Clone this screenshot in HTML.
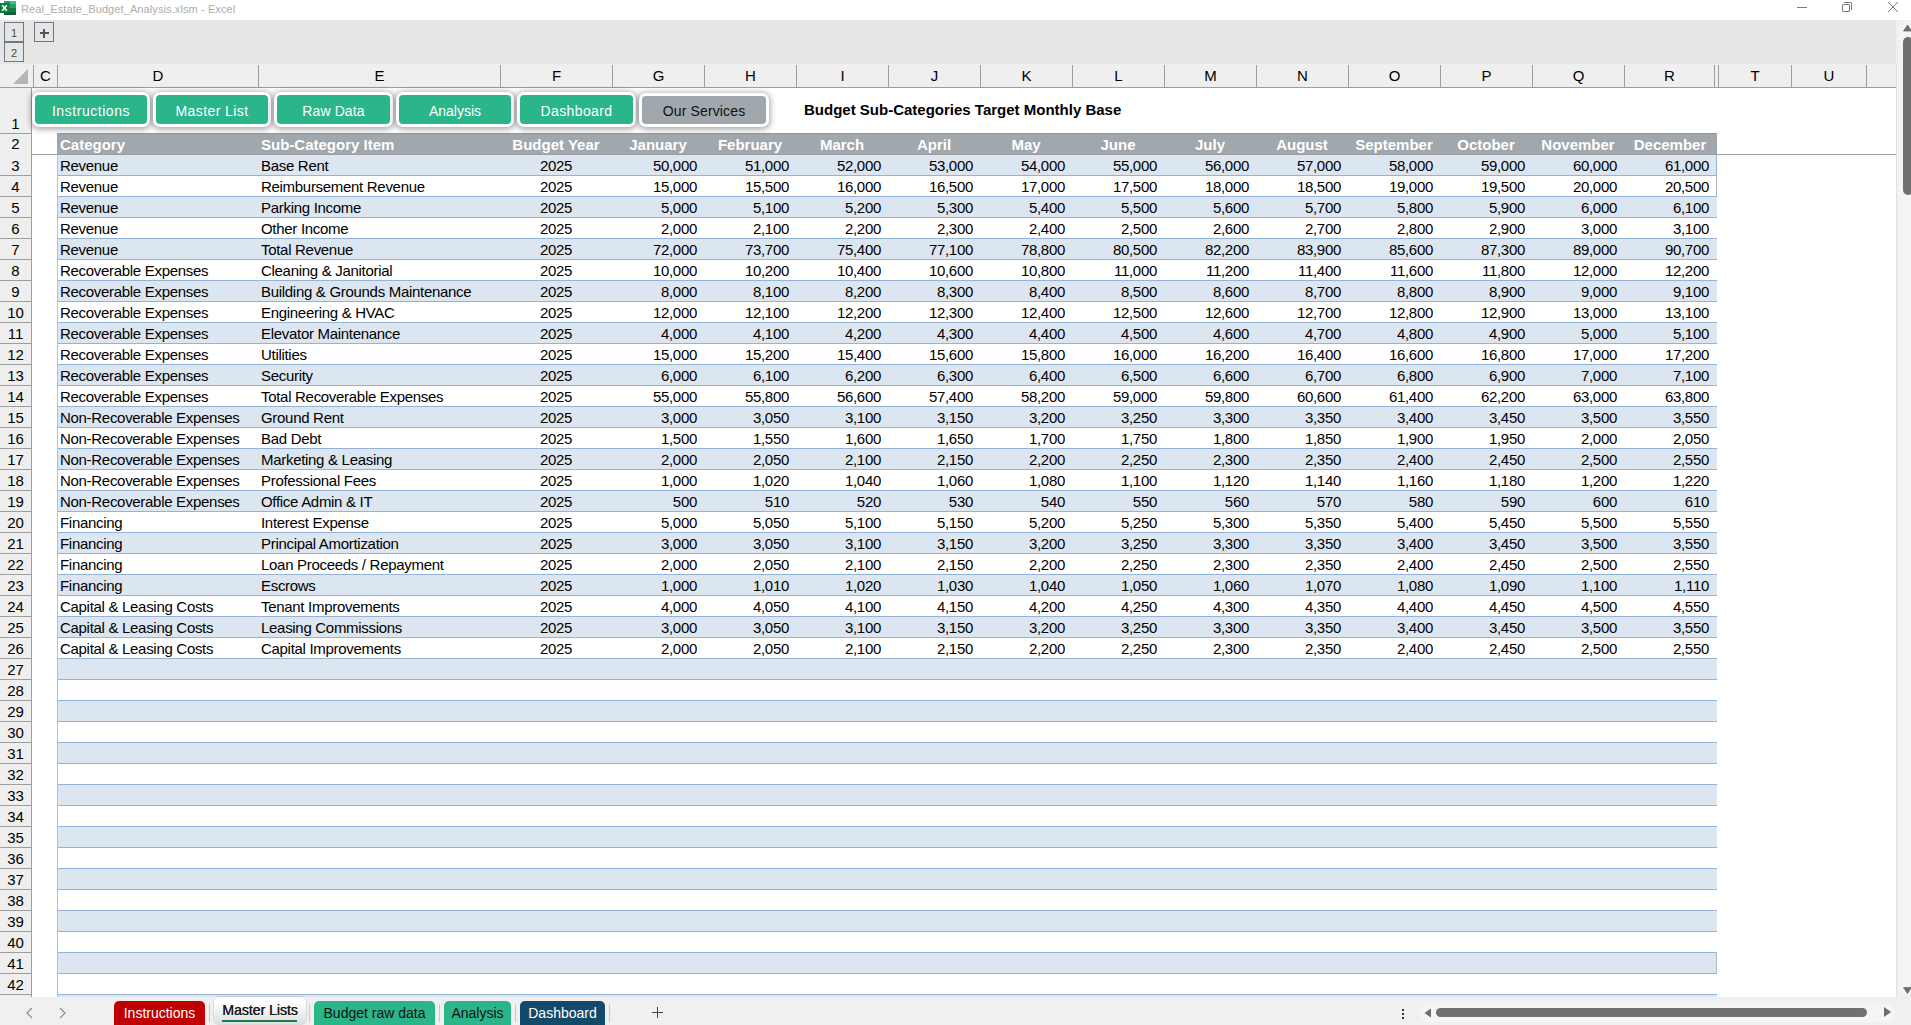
<!DOCTYPE html><html><head><meta charset="utf-8"><style>
*{margin:0;padding:0;box-sizing:border-box}
html,body{width:1911px;height:1025px;overflow:hidden;background:#fff;font-family:"Liberation Sans", sans-serif;position:relative}
.a{position:absolute}
.t{position:absolute;white-space:nowrap;line-height:1}
.ch{position:absolute;top:64px;height:23px;background:#efefef;font-size:15px;color:#000;text-align:center;line-height:23px}
.vl{position:absolute;width:1px;background:#9e9e9e}
.hl{position:absolute;height:1px;background:#9e9e9e}
.rh{position:absolute;left:0;width:31px;background:#efefef;font-size:15px;text-align:center;color:#000}
.row{position:absolute;left:57px;width:1660px;height:21px;border-bottom:1px solid #95b3d7;font-size:15px;color:#000}
.row.b{background:#dce6f1}
.c{position:absolute;top:0;height:20px;line-height:21px;white-space:nowrap;letter-spacing:-0.3px}
.btn{position:absolute;top:92px;height:35px;border-radius:7px;background:#fff;box-shadow:0 1px 6px 1px rgba(0,0,0,.38)}
.btn i{position:absolute;left:3px;top:3px;right:3px;bottom:3px;border-radius:4px;background:#2bb58b}
.btn b{position:absolute;left:0;right:0;top:12px;font-weight:400;color:#fff;font-size:14px;text-align:center;line-height:1;white-space:nowrap}
.tab{position:absolute;top:1001px;height:24px;border-radius:5px 5px 0 0;font-size:14px;line-height:24px;text-align:center}
.sep{position:absolute;top:1004px;width:1px;height:18px;background:#c8c8c8}

</style></head><body>
<div class="a" style="left:0;top:0;width:1911px;height:20px;background:#fff"></div>
<svg class="a" style="left:0;top:0" width="17" height="16"><rect x="4" y="1" width="12" height="3" fill="#21a366"/><rect x="10" y="1" width="6" height="3" fill="#33c481"/><rect x="4" y="4" width="12" height="4" fill="#21a366"/><rect x="4" y="8" width="12" height="4" fill="#107c41"/><rect x="4" y="12" width="12" height="3" fill="#185c37"/><rect x="0" y="3" width="9.5" height="10" fill="#107c41"/><path d="M2.3 5.2 L6.8 10.8 M6.8 5.2 L2.3 10.8" stroke="#fff" stroke-width="1.6"/></svg>
<div class="t" style="left:21px;top:4px;font-size:11px;letter-spacing:0.1px;color:#acacac">Real_Estate_Budget_Analysis.xlsm - Excel</div>
<div class="a" style="left:1797px;top:7px;width:10px;height:1px;background:#7a7a7a"></div>
<div class="a" style="left:1842px;top:4px;width:8px;height:8px;border:1px solid #7a7a7a;border-radius:1px"></div>
<div class="a" style="left:1844px;top:2px;width:8px;height:8px;border-top:1px solid #7a7a7a;border-right:1px solid #7a7a7a;border-radius:0 2px 0 0"></div>
<svg class="a" style="left:1887px;top:1px" width="12" height="12"><path d="M1 1 L11 11 M11 1 L1 11" stroke="#7a7a7a" stroke-width="1"/></svg>
<div class="a" style="left:0;top:20px;width:1896px;height:44px;background:#e6e6e6"></div>
<div class="a" style="left:4px;top:22px;width:20px;height:20px;border:1px solid #6f7782;font-size:11px;text-align:center;line-height:20px;color:#444">1</div>
<div class="a" style="left:4px;top:42px;width:20px;height:20px;border:1px solid #6f7782;font-size:11px;text-align:center;line-height:20px;color:#444">2</div>
<div class="a" style="left:34px;top:22px;width:20px;height:20px;border:1px solid #6f7782"></div>
<div class="a" style="left:40px;top:32px;width:9px;height:2px;background:#555"></div>
<div class="a" style="left:43px;top:29px;width:2px;height:9px;background:#555"></div>
<div class="a" style="left:0;top:64px;width:1896px;height:24px;background:#efefef"></div>
<div class="a" style="left:0;top:87px;width:1896px;height:1px;background:#9e9e9e"></div>
<svg class="a" style="left:13px;top:69px" width="16" height="16"><path d="M15 0 L15 15 L0 15 Z" fill="#b4b4b4"/></svg>
<div class="ch" style="left:34px;width:23px">C</div>
<div class="ch" style="left:58px;width:200px">D</div>
<div class="ch" style="left:259px;width:241px">E</div>
<div class="ch" style="left:501px;width:111px">F</div>
<div class="ch" style="left:613px;width:91px">G</div>
<div class="ch" style="left:705px;width:91px">H</div>
<div class="ch" style="left:797px;width:91px">I</div>
<div class="ch" style="left:889px;width:91px">J</div>
<div class="ch" style="left:981px;width:91px">K</div>
<div class="ch" style="left:1073px;width:91px">L</div>
<div class="ch" style="left:1165px;width:91px">M</div>
<div class="ch" style="left:1257px;width:91px">N</div>
<div class="ch" style="left:1349px;width:91px">O</div>
<div class="ch" style="left:1441px;width:91px">P</div>
<div class="ch" style="left:1533px;width:91px">Q</div>
<div class="ch" style="left:1625px;width:89px">R</div>
<div class="ch" style="left:1719px;width:72px">T</div>
<div class="ch" style="left:1792px;width:74px">U</div>
<div class="vl" style="left:33px;top:65px;height:22px"></div>
<div class="vl" style="left:57px;top:65px;height:22px"></div>
<div class="vl" style="left:258px;top:65px;height:22px"></div>
<div class="vl" style="left:500px;top:65px;height:22px"></div>
<div class="vl" style="left:612px;top:65px;height:22px"></div>
<div class="vl" style="left:704px;top:65px;height:22px"></div>
<div class="vl" style="left:796px;top:65px;height:22px"></div>
<div class="vl" style="left:888px;top:65px;height:22px"></div>
<div class="vl" style="left:980px;top:65px;height:22px"></div>
<div class="vl" style="left:1072px;top:65px;height:22px"></div>
<div class="vl" style="left:1164px;top:65px;height:22px"></div>
<div class="vl" style="left:1256px;top:65px;height:22px"></div>
<div class="vl" style="left:1348px;top:65px;height:22px"></div>
<div class="vl" style="left:1440px;top:65px;height:22px"></div>
<div class="vl" style="left:1532px;top:65px;height:22px"></div>
<div class="vl" style="left:1624px;top:65px;height:22px"></div>
<div class="vl" style="left:1714px;top:65px;height:22px"></div>
<div class="vl" style="left:1718px;top:65px;height:22px"></div>
<div class="vl" style="left:1791px;top:65px;height:22px"></div>
<div class="vl" style="left:1866px;top:65px;height:22px"></div>
<div class="a" style="left:0;top:88px;width:31px;height:909px;background:#efefef"></div>
<div class="vl" style="left:31px;top:88px;height:909px"></div>
<div class="rh" style="top:88px;height:45px;line-height:1"><span style="position:absolute;left:0;right:0;top:28px">1</span></div>
<div class="hl" style="left:0;top:133px;width:31px"></div>
<div class="rh" style="top:134px;height:20px;line-height:20px">2</div>
<div class="rh" style="top:155px;height:20px;line-height:21px">3</div>
<div class="hl" style="left:0;top:175px;width:31px"></div>
<div class="rh" style="top:176px;height:20px;line-height:21px">4</div>
<div class="hl" style="left:0;top:196px;width:31px"></div>
<div class="rh" style="top:197px;height:20px;line-height:21px">5</div>
<div class="hl" style="left:0;top:217px;width:31px"></div>
<div class="rh" style="top:218px;height:20px;line-height:21px">6</div>
<div class="hl" style="left:0;top:238px;width:31px"></div>
<div class="rh" style="top:239px;height:20px;line-height:21px">7</div>
<div class="hl" style="left:0;top:259px;width:31px"></div>
<div class="rh" style="top:260px;height:20px;line-height:21px">8</div>
<div class="hl" style="left:0;top:280px;width:31px"></div>
<div class="rh" style="top:281px;height:20px;line-height:21px">9</div>
<div class="hl" style="left:0;top:301px;width:31px"></div>
<div class="rh" style="top:302px;height:20px;line-height:21px">10</div>
<div class="hl" style="left:0;top:322px;width:31px"></div>
<div class="rh" style="top:323px;height:20px;line-height:21px">11</div>
<div class="hl" style="left:0;top:343px;width:31px"></div>
<div class="rh" style="top:344px;height:20px;line-height:21px">12</div>
<div class="hl" style="left:0;top:364px;width:31px"></div>
<div class="rh" style="top:365px;height:20px;line-height:21px">13</div>
<div class="hl" style="left:0;top:385px;width:31px"></div>
<div class="rh" style="top:386px;height:20px;line-height:21px">14</div>
<div class="hl" style="left:0;top:406px;width:31px"></div>
<div class="rh" style="top:407px;height:20px;line-height:21px">15</div>
<div class="hl" style="left:0;top:427px;width:31px"></div>
<div class="rh" style="top:428px;height:20px;line-height:21px">16</div>
<div class="hl" style="left:0;top:448px;width:31px"></div>
<div class="rh" style="top:449px;height:20px;line-height:21px">17</div>
<div class="hl" style="left:0;top:469px;width:31px"></div>
<div class="rh" style="top:470px;height:20px;line-height:21px">18</div>
<div class="hl" style="left:0;top:490px;width:31px"></div>
<div class="rh" style="top:491px;height:20px;line-height:21px">19</div>
<div class="hl" style="left:0;top:511px;width:31px"></div>
<div class="rh" style="top:512px;height:20px;line-height:21px">20</div>
<div class="hl" style="left:0;top:532px;width:31px"></div>
<div class="rh" style="top:533px;height:20px;line-height:21px">21</div>
<div class="hl" style="left:0;top:553px;width:31px"></div>
<div class="rh" style="top:554px;height:20px;line-height:21px">22</div>
<div class="hl" style="left:0;top:574px;width:31px"></div>
<div class="rh" style="top:575px;height:20px;line-height:21px">23</div>
<div class="hl" style="left:0;top:595px;width:31px"></div>
<div class="rh" style="top:596px;height:20px;line-height:21px">24</div>
<div class="hl" style="left:0;top:616px;width:31px"></div>
<div class="rh" style="top:617px;height:20px;line-height:21px">25</div>
<div class="hl" style="left:0;top:637px;width:31px"></div>
<div class="rh" style="top:638px;height:20px;line-height:21px">26</div>
<div class="hl" style="left:0;top:658px;width:31px"></div>
<div class="rh" style="top:659px;height:20px;line-height:21px">27</div>
<div class="hl" style="left:0;top:679px;width:31px"></div>
<div class="rh" style="top:680px;height:20px;line-height:21px">28</div>
<div class="hl" style="left:0;top:700px;width:31px"></div>
<div class="rh" style="top:701px;height:20px;line-height:21px">29</div>
<div class="hl" style="left:0;top:721px;width:31px"></div>
<div class="rh" style="top:722px;height:20px;line-height:21px">30</div>
<div class="hl" style="left:0;top:742px;width:31px"></div>
<div class="rh" style="top:743px;height:20px;line-height:21px">31</div>
<div class="hl" style="left:0;top:763px;width:31px"></div>
<div class="rh" style="top:764px;height:20px;line-height:21px">32</div>
<div class="hl" style="left:0;top:784px;width:31px"></div>
<div class="rh" style="top:785px;height:20px;line-height:21px">33</div>
<div class="hl" style="left:0;top:805px;width:31px"></div>
<div class="rh" style="top:806px;height:20px;line-height:21px">34</div>
<div class="hl" style="left:0;top:826px;width:31px"></div>
<div class="rh" style="top:827px;height:20px;line-height:21px">35</div>
<div class="hl" style="left:0;top:847px;width:31px"></div>
<div class="rh" style="top:848px;height:20px;line-height:21px">36</div>
<div class="hl" style="left:0;top:868px;width:31px"></div>
<div class="rh" style="top:869px;height:20px;line-height:21px">37</div>
<div class="hl" style="left:0;top:889px;width:31px"></div>
<div class="rh" style="top:890px;height:20px;line-height:21px">38</div>
<div class="hl" style="left:0;top:910px;width:31px"></div>
<div class="rh" style="top:911px;height:20px;line-height:21px">39</div>
<div class="hl" style="left:0;top:931px;width:31px"></div>
<div class="rh" style="top:932px;height:20px;line-height:21px">40</div>
<div class="hl" style="left:0;top:952px;width:31px"></div>
<div class="rh" style="top:953px;height:20px;line-height:21px">41</div>
<div class="hl" style="left:0;top:973px;width:31px"></div>
<div class="rh" style="top:974px;height:20px;line-height:21px">42</div>
<div class="hl" style="left:0;top:994px;width:31px"></div>
<div class="a" style="left:57px;top:133px;width:1660px;height:21px;background:#a0a7ad;border-top:1px solid #969696;border-left:1px solid #a3a3a3"></div>
<div class="t" style="left:60px;top:137px;font-size:15px;font-weight:700;color:#fff">Category</div>
<div class="t" style="left:261px;top:137px;font-size:15px;font-weight:700;color:#fff">Sub-Category Item</div>
<div class="t" style="left:500px;width:112px;top:137px;font-size:15px;font-weight:700;color:#fff;text-align:center">Budget Year</div>
<div class="t" style="left:612px;width:92px;top:137px;font-size:15px;font-weight:700;color:#fff;text-align:center">January</div>
<div class="t" style="left:704px;width:92px;top:137px;font-size:15px;font-weight:700;color:#fff;text-align:center">February</div>
<div class="t" style="left:796px;width:92px;top:137px;font-size:15px;font-weight:700;color:#fff;text-align:center">March</div>
<div class="t" style="left:888px;width:92px;top:137px;font-size:15px;font-weight:700;color:#fff;text-align:center">April</div>
<div class="t" style="left:980px;width:92px;top:137px;font-size:15px;font-weight:700;color:#fff;text-align:center">May</div>
<div class="t" style="left:1072px;width:92px;top:137px;font-size:15px;font-weight:700;color:#fff;text-align:center">June</div>
<div class="t" style="left:1164px;width:92px;top:137px;font-size:15px;font-weight:700;color:#fff;text-align:center">July</div>
<div class="t" style="left:1256px;width:92px;top:137px;font-size:15px;font-weight:700;color:#fff;text-align:center">August</div>
<div class="t" style="left:1348px;width:92px;top:137px;font-size:15px;font-weight:700;color:#fff;text-align:center">September</div>
<div class="t" style="left:1440px;width:92px;top:137px;font-size:15px;font-weight:700;color:#fff;text-align:center">October</div>
<div class="t" style="left:1532px;width:92px;top:137px;font-size:15px;font-weight:700;color:#fff;text-align:center">November</div>
<div class="t" style="left:1624px;width:92px;top:137px;font-size:15px;font-weight:700;color:#fff;text-align:center">December</div>
<div class="row b" style="top:155px;border-right:1px solid #95b3d7;width:1660px"><div class="c" style="left:3px">Revenue</div><div class="c" style="left:204px">Base Rent</div><div class="c" style="left:443px;width:112px;text-align:center">2025</div><div class="c" style="left:555px;width:85px;text-align:right">50,000</div><div class="c" style="left:647px;width:85px;text-align:right">51,000</div><div class="c" style="left:739px;width:85px;text-align:right">52,000</div><div class="c" style="left:831px;width:85px;text-align:right">53,000</div><div class="c" style="left:923px;width:85px;text-align:right">54,000</div><div class="c" style="left:1015px;width:85px;text-align:right">55,000</div><div class="c" style="left:1107px;width:85px;text-align:right">56,000</div><div class="c" style="left:1199px;width:85px;text-align:right">57,000</div><div class="c" style="left:1291px;width:85px;text-align:right">58,000</div><div class="c" style="left:1383px;width:85px;text-align:right">59,000</div><div class="c" style="left:1475px;width:85px;text-align:right">60,000</div><div class="c" style="left:1567px;width:85px;text-align:right">61,000</div></div>
<div class="row" style="top:176px;border-right:1px solid #b8b8b8;width:1660px"><div class="c" style="left:3px">Revenue</div><div class="c" style="left:204px">Reimbursement Revenue</div><div class="c" style="left:443px;width:112px;text-align:center">2025</div><div class="c" style="left:555px;width:85px;text-align:right">15,000</div><div class="c" style="left:647px;width:85px;text-align:right">15,500</div><div class="c" style="left:739px;width:85px;text-align:right">16,000</div><div class="c" style="left:831px;width:85px;text-align:right">16,500</div><div class="c" style="left:923px;width:85px;text-align:right">17,000</div><div class="c" style="left:1015px;width:85px;text-align:right">17,500</div><div class="c" style="left:1107px;width:85px;text-align:right">18,000</div><div class="c" style="left:1199px;width:85px;text-align:right">18,500</div><div class="c" style="left:1291px;width:85px;text-align:right">19,000</div><div class="c" style="left:1383px;width:85px;text-align:right">19,500</div><div class="c" style="left:1475px;width:85px;text-align:right">20,000</div><div class="c" style="left:1567px;width:85px;text-align:right">20,500</div></div>
<div class="row b" style="top:197px"><div class="c" style="left:3px">Revenue</div><div class="c" style="left:204px">Parking Income</div><div class="c" style="left:443px;width:112px;text-align:center">2025</div><div class="c" style="left:555px;width:85px;text-align:right">5,000</div><div class="c" style="left:647px;width:85px;text-align:right">5,100</div><div class="c" style="left:739px;width:85px;text-align:right">5,200</div><div class="c" style="left:831px;width:85px;text-align:right">5,300</div><div class="c" style="left:923px;width:85px;text-align:right">5,400</div><div class="c" style="left:1015px;width:85px;text-align:right">5,500</div><div class="c" style="left:1107px;width:85px;text-align:right">5,600</div><div class="c" style="left:1199px;width:85px;text-align:right">5,700</div><div class="c" style="left:1291px;width:85px;text-align:right">5,800</div><div class="c" style="left:1383px;width:85px;text-align:right">5,900</div><div class="c" style="left:1475px;width:85px;text-align:right">6,000</div><div class="c" style="left:1567px;width:85px;text-align:right">6,100</div></div>
<div class="row" style="top:218px"><div class="c" style="left:3px">Revenue</div><div class="c" style="left:204px">Other Income</div><div class="c" style="left:443px;width:112px;text-align:center">2025</div><div class="c" style="left:555px;width:85px;text-align:right">2,000</div><div class="c" style="left:647px;width:85px;text-align:right">2,100</div><div class="c" style="left:739px;width:85px;text-align:right">2,200</div><div class="c" style="left:831px;width:85px;text-align:right">2,300</div><div class="c" style="left:923px;width:85px;text-align:right">2,400</div><div class="c" style="left:1015px;width:85px;text-align:right">2,500</div><div class="c" style="left:1107px;width:85px;text-align:right">2,600</div><div class="c" style="left:1199px;width:85px;text-align:right">2,700</div><div class="c" style="left:1291px;width:85px;text-align:right">2,800</div><div class="c" style="left:1383px;width:85px;text-align:right">2,900</div><div class="c" style="left:1475px;width:85px;text-align:right">3,000</div><div class="c" style="left:1567px;width:85px;text-align:right">3,100</div></div>
<div class="row b" style="top:239px"><div class="c" style="left:3px">Revenue</div><div class="c" style="left:204px">Total Revenue</div><div class="c" style="left:443px;width:112px;text-align:center">2025</div><div class="c" style="left:555px;width:85px;text-align:right">72,000</div><div class="c" style="left:647px;width:85px;text-align:right">73,700</div><div class="c" style="left:739px;width:85px;text-align:right">75,400</div><div class="c" style="left:831px;width:85px;text-align:right">77,100</div><div class="c" style="left:923px;width:85px;text-align:right">78,800</div><div class="c" style="left:1015px;width:85px;text-align:right">80,500</div><div class="c" style="left:1107px;width:85px;text-align:right">82,200</div><div class="c" style="left:1199px;width:85px;text-align:right">83,900</div><div class="c" style="left:1291px;width:85px;text-align:right">85,600</div><div class="c" style="left:1383px;width:85px;text-align:right">87,300</div><div class="c" style="left:1475px;width:85px;text-align:right">89,000</div><div class="c" style="left:1567px;width:85px;text-align:right">90,700</div></div>
<div class="row" style="top:260px"><div class="c" style="left:3px">Recoverable Expenses</div><div class="c" style="left:204px">Cleaning &amp; Janitorial</div><div class="c" style="left:443px;width:112px;text-align:center">2025</div><div class="c" style="left:555px;width:85px;text-align:right">10,000</div><div class="c" style="left:647px;width:85px;text-align:right">10,200</div><div class="c" style="left:739px;width:85px;text-align:right">10,400</div><div class="c" style="left:831px;width:85px;text-align:right">10,600</div><div class="c" style="left:923px;width:85px;text-align:right">10,800</div><div class="c" style="left:1015px;width:85px;text-align:right">11,000</div><div class="c" style="left:1107px;width:85px;text-align:right">11,200</div><div class="c" style="left:1199px;width:85px;text-align:right">11,400</div><div class="c" style="left:1291px;width:85px;text-align:right">11,600</div><div class="c" style="left:1383px;width:85px;text-align:right">11,800</div><div class="c" style="left:1475px;width:85px;text-align:right">12,000</div><div class="c" style="left:1567px;width:85px;text-align:right">12,200</div></div>
<div class="row b" style="top:281px"><div class="c" style="left:3px">Recoverable Expenses</div><div class="c" style="left:204px">Building &amp; Grounds Maintenance</div><div class="c" style="left:443px;width:112px;text-align:center">2025</div><div class="c" style="left:555px;width:85px;text-align:right">8,000</div><div class="c" style="left:647px;width:85px;text-align:right">8,100</div><div class="c" style="left:739px;width:85px;text-align:right">8,200</div><div class="c" style="left:831px;width:85px;text-align:right">8,300</div><div class="c" style="left:923px;width:85px;text-align:right">8,400</div><div class="c" style="left:1015px;width:85px;text-align:right">8,500</div><div class="c" style="left:1107px;width:85px;text-align:right">8,600</div><div class="c" style="left:1199px;width:85px;text-align:right">8,700</div><div class="c" style="left:1291px;width:85px;text-align:right">8,800</div><div class="c" style="left:1383px;width:85px;text-align:right">8,900</div><div class="c" style="left:1475px;width:85px;text-align:right">9,000</div><div class="c" style="left:1567px;width:85px;text-align:right">9,100</div></div>
<div class="row" style="top:302px"><div class="c" style="left:3px">Recoverable Expenses</div><div class="c" style="left:204px">Engineering &amp; HVAC</div><div class="c" style="left:443px;width:112px;text-align:center">2025</div><div class="c" style="left:555px;width:85px;text-align:right">12,000</div><div class="c" style="left:647px;width:85px;text-align:right">12,100</div><div class="c" style="left:739px;width:85px;text-align:right">12,200</div><div class="c" style="left:831px;width:85px;text-align:right">12,300</div><div class="c" style="left:923px;width:85px;text-align:right">12,400</div><div class="c" style="left:1015px;width:85px;text-align:right">12,500</div><div class="c" style="left:1107px;width:85px;text-align:right">12,600</div><div class="c" style="left:1199px;width:85px;text-align:right">12,700</div><div class="c" style="left:1291px;width:85px;text-align:right">12,800</div><div class="c" style="left:1383px;width:85px;text-align:right">12,900</div><div class="c" style="left:1475px;width:85px;text-align:right">13,000</div><div class="c" style="left:1567px;width:85px;text-align:right">13,100</div></div>
<div class="row b" style="top:323px"><div class="c" style="left:3px">Recoverable Expenses</div><div class="c" style="left:204px">Elevator Maintenance</div><div class="c" style="left:443px;width:112px;text-align:center">2025</div><div class="c" style="left:555px;width:85px;text-align:right">4,000</div><div class="c" style="left:647px;width:85px;text-align:right">4,100</div><div class="c" style="left:739px;width:85px;text-align:right">4,200</div><div class="c" style="left:831px;width:85px;text-align:right">4,300</div><div class="c" style="left:923px;width:85px;text-align:right">4,400</div><div class="c" style="left:1015px;width:85px;text-align:right">4,500</div><div class="c" style="left:1107px;width:85px;text-align:right">4,600</div><div class="c" style="left:1199px;width:85px;text-align:right">4,700</div><div class="c" style="left:1291px;width:85px;text-align:right">4,800</div><div class="c" style="left:1383px;width:85px;text-align:right">4,900</div><div class="c" style="left:1475px;width:85px;text-align:right">5,000</div><div class="c" style="left:1567px;width:85px;text-align:right">5,100</div></div>
<div class="row" style="top:344px"><div class="c" style="left:3px">Recoverable Expenses</div><div class="c" style="left:204px">Utilities</div><div class="c" style="left:443px;width:112px;text-align:center">2025</div><div class="c" style="left:555px;width:85px;text-align:right">15,000</div><div class="c" style="left:647px;width:85px;text-align:right">15,200</div><div class="c" style="left:739px;width:85px;text-align:right">15,400</div><div class="c" style="left:831px;width:85px;text-align:right">15,600</div><div class="c" style="left:923px;width:85px;text-align:right">15,800</div><div class="c" style="left:1015px;width:85px;text-align:right">16,000</div><div class="c" style="left:1107px;width:85px;text-align:right">16,200</div><div class="c" style="left:1199px;width:85px;text-align:right">16,400</div><div class="c" style="left:1291px;width:85px;text-align:right">16,600</div><div class="c" style="left:1383px;width:85px;text-align:right">16,800</div><div class="c" style="left:1475px;width:85px;text-align:right">17,000</div><div class="c" style="left:1567px;width:85px;text-align:right">17,200</div></div>
<div class="row b" style="top:365px"><div class="c" style="left:3px">Recoverable Expenses</div><div class="c" style="left:204px">Security</div><div class="c" style="left:443px;width:112px;text-align:center">2025</div><div class="c" style="left:555px;width:85px;text-align:right">6,000</div><div class="c" style="left:647px;width:85px;text-align:right">6,100</div><div class="c" style="left:739px;width:85px;text-align:right">6,200</div><div class="c" style="left:831px;width:85px;text-align:right">6,300</div><div class="c" style="left:923px;width:85px;text-align:right">6,400</div><div class="c" style="left:1015px;width:85px;text-align:right">6,500</div><div class="c" style="left:1107px;width:85px;text-align:right">6,600</div><div class="c" style="left:1199px;width:85px;text-align:right">6,700</div><div class="c" style="left:1291px;width:85px;text-align:right">6,800</div><div class="c" style="left:1383px;width:85px;text-align:right">6,900</div><div class="c" style="left:1475px;width:85px;text-align:right">7,000</div><div class="c" style="left:1567px;width:85px;text-align:right">7,100</div></div>
<div class="row" style="top:386px"><div class="c" style="left:3px">Recoverable Expenses</div><div class="c" style="left:204px">Total Recoverable Expenses</div><div class="c" style="left:443px;width:112px;text-align:center">2025</div><div class="c" style="left:555px;width:85px;text-align:right">55,000</div><div class="c" style="left:647px;width:85px;text-align:right">55,800</div><div class="c" style="left:739px;width:85px;text-align:right">56,600</div><div class="c" style="left:831px;width:85px;text-align:right">57,400</div><div class="c" style="left:923px;width:85px;text-align:right">58,200</div><div class="c" style="left:1015px;width:85px;text-align:right">59,000</div><div class="c" style="left:1107px;width:85px;text-align:right">59,800</div><div class="c" style="left:1199px;width:85px;text-align:right">60,600</div><div class="c" style="left:1291px;width:85px;text-align:right">61,400</div><div class="c" style="left:1383px;width:85px;text-align:right">62,200</div><div class="c" style="left:1475px;width:85px;text-align:right">63,000</div><div class="c" style="left:1567px;width:85px;text-align:right">63,800</div></div>
<div class="row b" style="top:407px"><div class="c" style="left:3px">Non-Recoverable Expenses</div><div class="c" style="left:204px">Ground Rent</div><div class="c" style="left:443px;width:112px;text-align:center">2025</div><div class="c" style="left:555px;width:85px;text-align:right">3,000</div><div class="c" style="left:647px;width:85px;text-align:right">3,050</div><div class="c" style="left:739px;width:85px;text-align:right">3,100</div><div class="c" style="left:831px;width:85px;text-align:right">3,150</div><div class="c" style="left:923px;width:85px;text-align:right">3,200</div><div class="c" style="left:1015px;width:85px;text-align:right">3,250</div><div class="c" style="left:1107px;width:85px;text-align:right">3,300</div><div class="c" style="left:1199px;width:85px;text-align:right">3,350</div><div class="c" style="left:1291px;width:85px;text-align:right">3,400</div><div class="c" style="left:1383px;width:85px;text-align:right">3,450</div><div class="c" style="left:1475px;width:85px;text-align:right">3,500</div><div class="c" style="left:1567px;width:85px;text-align:right">3,550</div></div>
<div class="row" style="top:428px"><div class="c" style="left:3px">Non-Recoverable Expenses</div><div class="c" style="left:204px">Bad Debt</div><div class="c" style="left:443px;width:112px;text-align:center">2025</div><div class="c" style="left:555px;width:85px;text-align:right">1,500</div><div class="c" style="left:647px;width:85px;text-align:right">1,550</div><div class="c" style="left:739px;width:85px;text-align:right">1,600</div><div class="c" style="left:831px;width:85px;text-align:right">1,650</div><div class="c" style="left:923px;width:85px;text-align:right">1,700</div><div class="c" style="left:1015px;width:85px;text-align:right">1,750</div><div class="c" style="left:1107px;width:85px;text-align:right">1,800</div><div class="c" style="left:1199px;width:85px;text-align:right">1,850</div><div class="c" style="left:1291px;width:85px;text-align:right">1,900</div><div class="c" style="left:1383px;width:85px;text-align:right">1,950</div><div class="c" style="left:1475px;width:85px;text-align:right">2,000</div><div class="c" style="left:1567px;width:85px;text-align:right">2,050</div></div>
<div class="row b" style="top:449px"><div class="c" style="left:3px">Non-Recoverable Expenses</div><div class="c" style="left:204px">Marketing &amp; Leasing</div><div class="c" style="left:443px;width:112px;text-align:center">2025</div><div class="c" style="left:555px;width:85px;text-align:right">2,000</div><div class="c" style="left:647px;width:85px;text-align:right">2,050</div><div class="c" style="left:739px;width:85px;text-align:right">2,100</div><div class="c" style="left:831px;width:85px;text-align:right">2,150</div><div class="c" style="left:923px;width:85px;text-align:right">2,200</div><div class="c" style="left:1015px;width:85px;text-align:right">2,250</div><div class="c" style="left:1107px;width:85px;text-align:right">2,300</div><div class="c" style="left:1199px;width:85px;text-align:right">2,350</div><div class="c" style="left:1291px;width:85px;text-align:right">2,400</div><div class="c" style="left:1383px;width:85px;text-align:right">2,450</div><div class="c" style="left:1475px;width:85px;text-align:right">2,500</div><div class="c" style="left:1567px;width:85px;text-align:right">2,550</div></div>
<div class="row" style="top:470px"><div class="c" style="left:3px">Non-Recoverable Expenses</div><div class="c" style="left:204px">Professional Fees</div><div class="c" style="left:443px;width:112px;text-align:center">2025</div><div class="c" style="left:555px;width:85px;text-align:right">1,000</div><div class="c" style="left:647px;width:85px;text-align:right">1,020</div><div class="c" style="left:739px;width:85px;text-align:right">1,040</div><div class="c" style="left:831px;width:85px;text-align:right">1,060</div><div class="c" style="left:923px;width:85px;text-align:right">1,080</div><div class="c" style="left:1015px;width:85px;text-align:right">1,100</div><div class="c" style="left:1107px;width:85px;text-align:right">1,120</div><div class="c" style="left:1199px;width:85px;text-align:right">1,140</div><div class="c" style="left:1291px;width:85px;text-align:right">1,160</div><div class="c" style="left:1383px;width:85px;text-align:right">1,180</div><div class="c" style="left:1475px;width:85px;text-align:right">1,200</div><div class="c" style="left:1567px;width:85px;text-align:right">1,220</div></div>
<div class="row b" style="top:491px"><div class="c" style="left:3px">Non-Recoverable Expenses</div><div class="c" style="left:204px">Office Admin &amp; IT</div><div class="c" style="left:443px;width:112px;text-align:center">2025</div><div class="c" style="left:555px;width:85px;text-align:right">500</div><div class="c" style="left:647px;width:85px;text-align:right">510</div><div class="c" style="left:739px;width:85px;text-align:right">520</div><div class="c" style="left:831px;width:85px;text-align:right">530</div><div class="c" style="left:923px;width:85px;text-align:right">540</div><div class="c" style="left:1015px;width:85px;text-align:right">550</div><div class="c" style="left:1107px;width:85px;text-align:right">560</div><div class="c" style="left:1199px;width:85px;text-align:right">570</div><div class="c" style="left:1291px;width:85px;text-align:right">580</div><div class="c" style="left:1383px;width:85px;text-align:right">590</div><div class="c" style="left:1475px;width:85px;text-align:right">600</div><div class="c" style="left:1567px;width:85px;text-align:right">610</div></div>
<div class="row" style="top:512px"><div class="c" style="left:3px">Financing</div><div class="c" style="left:204px">Interest Expense</div><div class="c" style="left:443px;width:112px;text-align:center">2025</div><div class="c" style="left:555px;width:85px;text-align:right">5,000</div><div class="c" style="left:647px;width:85px;text-align:right">5,050</div><div class="c" style="left:739px;width:85px;text-align:right">5,100</div><div class="c" style="left:831px;width:85px;text-align:right">5,150</div><div class="c" style="left:923px;width:85px;text-align:right">5,200</div><div class="c" style="left:1015px;width:85px;text-align:right">5,250</div><div class="c" style="left:1107px;width:85px;text-align:right">5,300</div><div class="c" style="left:1199px;width:85px;text-align:right">5,350</div><div class="c" style="left:1291px;width:85px;text-align:right">5,400</div><div class="c" style="left:1383px;width:85px;text-align:right">5,450</div><div class="c" style="left:1475px;width:85px;text-align:right">5,500</div><div class="c" style="left:1567px;width:85px;text-align:right">5,550</div></div>
<div class="row b" style="top:533px"><div class="c" style="left:3px">Financing</div><div class="c" style="left:204px">Principal Amortization</div><div class="c" style="left:443px;width:112px;text-align:center">2025</div><div class="c" style="left:555px;width:85px;text-align:right">3,000</div><div class="c" style="left:647px;width:85px;text-align:right">3,050</div><div class="c" style="left:739px;width:85px;text-align:right">3,100</div><div class="c" style="left:831px;width:85px;text-align:right">3,150</div><div class="c" style="left:923px;width:85px;text-align:right">3,200</div><div class="c" style="left:1015px;width:85px;text-align:right">3,250</div><div class="c" style="left:1107px;width:85px;text-align:right">3,300</div><div class="c" style="left:1199px;width:85px;text-align:right">3,350</div><div class="c" style="left:1291px;width:85px;text-align:right">3,400</div><div class="c" style="left:1383px;width:85px;text-align:right">3,450</div><div class="c" style="left:1475px;width:85px;text-align:right">3,500</div><div class="c" style="left:1567px;width:85px;text-align:right">3,550</div></div>
<div class="row" style="top:554px"><div class="c" style="left:3px">Financing</div><div class="c" style="left:204px">Loan Proceeds / Repayment</div><div class="c" style="left:443px;width:112px;text-align:center">2025</div><div class="c" style="left:555px;width:85px;text-align:right">2,000</div><div class="c" style="left:647px;width:85px;text-align:right">2,050</div><div class="c" style="left:739px;width:85px;text-align:right">2,100</div><div class="c" style="left:831px;width:85px;text-align:right">2,150</div><div class="c" style="left:923px;width:85px;text-align:right">2,200</div><div class="c" style="left:1015px;width:85px;text-align:right">2,250</div><div class="c" style="left:1107px;width:85px;text-align:right">2,300</div><div class="c" style="left:1199px;width:85px;text-align:right">2,350</div><div class="c" style="left:1291px;width:85px;text-align:right">2,400</div><div class="c" style="left:1383px;width:85px;text-align:right">2,450</div><div class="c" style="left:1475px;width:85px;text-align:right">2,500</div><div class="c" style="left:1567px;width:85px;text-align:right">2,550</div></div>
<div class="row b" style="top:575px"><div class="c" style="left:3px">Financing</div><div class="c" style="left:204px">Escrows</div><div class="c" style="left:443px;width:112px;text-align:center">2025</div><div class="c" style="left:555px;width:85px;text-align:right">1,000</div><div class="c" style="left:647px;width:85px;text-align:right">1,010</div><div class="c" style="left:739px;width:85px;text-align:right">1,020</div><div class="c" style="left:831px;width:85px;text-align:right">1,030</div><div class="c" style="left:923px;width:85px;text-align:right">1,040</div><div class="c" style="left:1015px;width:85px;text-align:right">1,050</div><div class="c" style="left:1107px;width:85px;text-align:right">1,060</div><div class="c" style="left:1199px;width:85px;text-align:right">1,070</div><div class="c" style="left:1291px;width:85px;text-align:right">1,080</div><div class="c" style="left:1383px;width:85px;text-align:right">1,090</div><div class="c" style="left:1475px;width:85px;text-align:right">1,100</div><div class="c" style="left:1567px;width:85px;text-align:right">1,110</div></div>
<div class="row" style="top:596px"><div class="c" style="left:3px">Capital &amp; Leasing Costs</div><div class="c" style="left:204px">Tenant Improvements</div><div class="c" style="left:443px;width:112px;text-align:center">2025</div><div class="c" style="left:555px;width:85px;text-align:right">4,000</div><div class="c" style="left:647px;width:85px;text-align:right">4,050</div><div class="c" style="left:739px;width:85px;text-align:right">4,100</div><div class="c" style="left:831px;width:85px;text-align:right">4,150</div><div class="c" style="left:923px;width:85px;text-align:right">4,200</div><div class="c" style="left:1015px;width:85px;text-align:right">4,250</div><div class="c" style="left:1107px;width:85px;text-align:right">4,300</div><div class="c" style="left:1199px;width:85px;text-align:right">4,350</div><div class="c" style="left:1291px;width:85px;text-align:right">4,400</div><div class="c" style="left:1383px;width:85px;text-align:right">4,450</div><div class="c" style="left:1475px;width:85px;text-align:right">4,500</div><div class="c" style="left:1567px;width:85px;text-align:right">4,550</div></div>
<div class="row b" style="top:617px"><div class="c" style="left:3px">Capital &amp; Leasing Costs</div><div class="c" style="left:204px">Leasing Commissions</div><div class="c" style="left:443px;width:112px;text-align:center">2025</div><div class="c" style="left:555px;width:85px;text-align:right">3,000</div><div class="c" style="left:647px;width:85px;text-align:right">3,050</div><div class="c" style="left:739px;width:85px;text-align:right">3,100</div><div class="c" style="left:831px;width:85px;text-align:right">3,150</div><div class="c" style="left:923px;width:85px;text-align:right">3,200</div><div class="c" style="left:1015px;width:85px;text-align:right">3,250</div><div class="c" style="left:1107px;width:85px;text-align:right">3,300</div><div class="c" style="left:1199px;width:85px;text-align:right">3,350</div><div class="c" style="left:1291px;width:85px;text-align:right">3,400</div><div class="c" style="left:1383px;width:85px;text-align:right">3,450</div><div class="c" style="left:1475px;width:85px;text-align:right">3,500</div><div class="c" style="left:1567px;width:85px;text-align:right">3,550</div></div>
<div class="row" style="top:638px"><div class="c" style="left:3px">Capital &amp; Leasing Costs</div><div class="c" style="left:204px">Capital Improvements</div><div class="c" style="left:443px;width:112px;text-align:center">2025</div><div class="c" style="left:555px;width:85px;text-align:right">2,000</div><div class="c" style="left:647px;width:85px;text-align:right">2,050</div><div class="c" style="left:739px;width:85px;text-align:right">2,100</div><div class="c" style="left:831px;width:85px;text-align:right">2,150</div><div class="c" style="left:923px;width:85px;text-align:right">2,200</div><div class="c" style="left:1015px;width:85px;text-align:right">2,250</div><div class="c" style="left:1107px;width:85px;text-align:right">2,300</div><div class="c" style="left:1199px;width:85px;text-align:right">2,350</div><div class="c" style="left:1291px;width:85px;text-align:right">2,400</div><div class="c" style="left:1383px;width:85px;text-align:right">2,450</div><div class="c" style="left:1475px;width:85px;text-align:right">2,500</div><div class="c" style="left:1567px;width:85px;text-align:right">2,550</div></div>
<div class="row b" style="top:659px"></div>
<div class="row" style="top:680px"></div>
<div class="row b" style="top:701px"></div>
<div class="row" style="top:722px"></div>
<div class="row b" style="top:743px"></div>
<div class="row" style="top:764px"></div>
<div class="row b" style="top:785px"></div>
<div class="row" style="top:806px"></div>
<div class="row b" style="top:827px"></div>
<div class="row" style="top:848px"></div>
<div class="row b" style="top:869px"></div>
<div class="row" style="top:890px"></div>
<div class="row b" style="top:911px"></div>
<div class="row" style="top:932px"></div>
<div class="row b" style="top:953px;border-right:1px solid #b8b8b8;width:1660px"></div>
<div class="row" style="top:974px"></div>
<div class="row b" style="top:995px"></div>
<div class="a" style="left:31px;top:154px;width:1865px;height:1px;background:#9e9e9e"></div>
<div class="a" style="left:57px;top:155px;width:1px;height:842px;background:#c0c0c0"></div>
<div class="btn" style="left:32px;width:118px"><i></i><b style="letter-spacing:0.55px">Instructions</b></div>
<div class="btn" style="left:153px;width:118px"><i></i><b style="letter-spacing:0.43px">Master List</b></div>
<div class="btn" style="left:274px;width:119px"><i></i><b style="letter-spacing:0.1px">Raw Data</b></div>
<div class="btn" style="left:396px;width:118px"><i></i><b style="letter-spacing:0px">Analysis</b></div>
<div class="btn" style="left:517px;width:119px"><i></i><b style="letter-spacing:0.37px">Dashboard</b></div>
<div class="btn" style="left:639px;width:130px;top:93px;height:34px"><i style="background:#a0a7ad"></i><b style="letter-spacing:0.14px;color:#111;top:11px">Our Services</b></div>
<div class="t" style="left:804px;top:102px;font-size:15px;font-weight:700;color:#000">Budget Sub-Categories Target Monthly Base</div>
<div class="a" style="left:1896px;top:20px;width:15px;height:977px;background:#f0f0f0"></div>
<div class="a" style="left:1896px;top:64px;width:1px;height:933px;background:#e2e2e2"></div>
<div class="a" style="left:1899px;top:21px;width:14px;height:974px;background:#f4f4f4;border-radius:7px"></div>
<svg class="a" style="left:1903px;top:24px" width="9" height="8"><path d="M4.5 1 L8.5 7 L0.5 7 Z" fill="#6d6d6d" stroke="#6d6d6d" stroke-width="0.8" stroke-linejoin="round"/></svg>
<div class="a" style="left:1903px;top:37px;width:10px;height:158px;background:#707070;border-radius:5px"></div>
<svg class="a" style="left:1903px;top:987px" width="9" height="8"><path d="M0.5 0.5 L8.5 0.5 L4.5 6.5 Z" fill="#6d6d6d" stroke="#6d6d6d" stroke-width="0.8" stroke-linejoin="round"/></svg>
<div class="a" style="left:0;top:997px;width:1911px;height:28px;background:#f0f0f0"></div>
<svg class="a" style="left:24px;top:1007px" width="12" height="12"><path d="M8 1 L3 6 L8 11" stroke="#8a8a8a" stroke-width="1.2" fill="none"/></svg>
<svg class="a" style="left:56px;top:1007px" width="12" height="12"><path d="M4 1 L9 6 L4 11" stroke="#8a8a8a" stroke-width="1.2" fill="none"/></svg>
<div class="tab" style="left:114px;width:91px;background:#c00000;color:#fff">Instructions</div>
<div class="sep" style="left:209px"></div>
<div class="a" style="left:214px;top:997px;width:92px;height:27px;border-radius:5px;background:linear-gradient(#ffffff 20%,#dcdfe2);box-shadow:0 0 1px 1px rgba(0,0,0,.10)"></div>
<div class="t" style="left:214px;width:92px;top:1003px;font-size:14px;text-align:center;color:#1a1a1a;text-shadow:0.35px 0 0 #1a1a1a">Master Lists</div>
<div class="a" style="left:222px;top:1020px;width:75px;height:2px;background:#1e7b45"></div>
<div class="sep" style="left:309px"></div>
<div class="tab" style="left:314px;width:121px;background:#2bb58b;color:#111">Budget raw data</div>
<div class="sep" style="left:439px"></div>
<div class="tab" style="left:444px;width:67px;background:#2bb58b;color:#111">Analysis</div>
<div class="sep" style="left:515px"></div>
<div class="tab" style="left:520px;width:85px;background:#144a69;color:#fff">Dashboard</div>
<div class="sep" style="left:609px"></div>
<div class="a" style="left:652px;top:1012px;width:11px;height:1px;background:#444"></div>
<div class="a" style="left:657px;top:1007px;width:1px;height:11px;background:#444"></div>
<div class="a" style="left:1402px;top:1009px;width:2px;height:2px;background:#333"></div>
<div class="a" style="left:1402px;top:1013px;width:2px;height:2px;background:#333"></div>
<div class="a" style="left:1402px;top:1017px;width:2px;height:2px;background:#333"></div>
<div class="a" style="left:1420px;top:1004px;width:475px;height:18px;background:#f5f5f5;border-radius:9px"></div>
<svg class="a" style="left:1424px;top:1008px" width="8" height="11"><path d="M7 0.5 L7 9.5 L0.5 5 Z" fill="#6d6d6d"/></svg>
<div class="a" style="left:1436px;top:1008px;width:431px;height:9px;background:#707070;border-radius:5px"></div>
<svg class="a" style="left:1884px;top:1007px" width="8" height="11"><path d="M0 0 L0 10 L7 5 Z" fill="#6d6d6d"/></svg>
</body></html>
